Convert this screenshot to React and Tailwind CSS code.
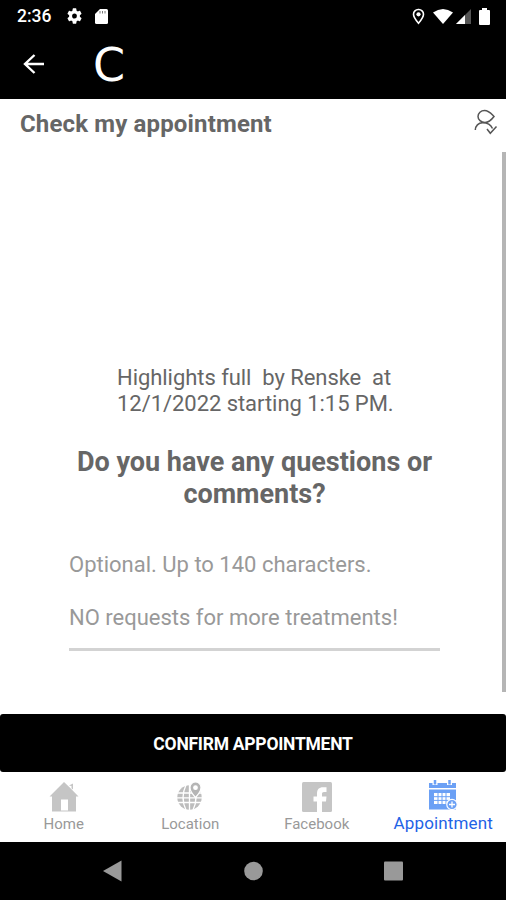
import React from "react";

function StatusBar() {
  return (
    <div className="flex h-8 items-center bg-black pl-[17px] pr-[15px] text-white">
      <span className="w-[50px] text-[17.5px] font-medium leading-8">2:36</span>
      <svg width="15" height="16" viewBox="2 2 20 20" fill="currentColor" preserveAspectRatio="none">
        <path d="M19.14 12.94c.04-.3.06-.61.06-.94s-.02-.64-.07-.94l2.03-1.58a.5.5 0 0 0 .12-.61l-1.92-3.32a.49.49 0 0 0-.59-.22l-2.39.96a7 7 0 0 0-1.62-.94l-.36-2.54A.48.48 0 0 0 13.92 2.4h-3.84a.47.47 0 0 0-.47.41l-.36 2.54c-.59.24-1.13.57-1.62.94l-2.39-.96a.48.48 0 0 0-.59.22L2.74 8.87a.47.47 0 0 0 .12.61l2.03 1.58a6 6 0 0 0 0 1.88l-2.03 1.58a.5.5 0 0 0-.12.61l1.92 3.32c.12.22.37.29.59.22l2.39-.96c.5.38 1.03.7 1.62.94l.36 2.54c.05.24.24.41.48.41h3.84c.24 0 .44-.17.47-.41l.36-2.54a7 7 0 0 0 1.62-.94l2.39.96c.22.08.47 0 .59-.22l1.92-3.32a.47.47 0 0 0-.12-.61zM12 15.200A3.200 3.200 0 1 1 12 8.800a3.200 3.200 0 0 1 0 6.400z" />
      </svg>
      <svg className="ml-[13px]" width="13" height="15" viewBox="0 0 13 15">
        <path d="M5 0H11.500Q13 0 13 1.500V13.500Q13 15 11.500 15H1.500Q0 15 0 13.500V5Z" fill="white" />
        <path d="M5 2V4.500M7.500 2V4.500M10 2V4.500" stroke="#777" strokeWidth="1" />
      </svg>
      <div className="flex-1" />
      <svg width="13" height="17" viewBox="0 0 13 17">
        <path d="M6.500 1.500A4.700 4.700 0 0 0 1.500 6.300C1.500 9.500 6.500 15.300 6.500 15.300S11.500 9.500 11.500 6.300A4.700 4.700 0 0 0 6.500 1.500Z" fill="none" stroke="white" strokeWidth="1.600" />
        <circle cx="6.500" cy="6.300" r="2.100" fill="white" />
      </svg>
      <svg className="ml-[8px]" width="20" height="15" viewBox="0 0 20 15">
        <path d="M0 3.500Q10-3.500 20 3.500L10 15Z" fill="white" />
      </svg>
      <svg className="ml-[3px]" width="15" height="15" viewBox="0 0 15 15">
        <path d="M15 0V15H0Z" fill="#555" />
        <path d="M9 6V15H0Z" fill="white" />
      </svg>
      <svg className="ml-2 mr-px" width="11" height="17" viewBox="0 0 11 17">
        <path d="M3 0H8V2H10Q11 2 11 3V16Q11 17 10 17H1Q0 17 0 16V3Q0 2 1 2H3Z" fill="white" />
      </svg>
    </div>
  );
}

function AppBar() {
  return (
    <div className="flex h-[67px] items-center bg-black pl-[23px] text-white">
      <svg className="-mt-1" width="22" height="20" viewBox="0 0 22 20" fill="none" stroke="white" strokeWidth="2.400">
        <path d="M21 10H2M11.500 1L2 10L11.500 19" />
      </svg>
      <span className="ml-[48px] font-['DejaVu_Sans',sans-serif] text-[46px] leading-[67px]">C</span>
    </div>
  );
}

function UserCheckIcon() {
  return (
    <svg width="24" height="26" viewBox="0 0 24 26" fill="none" stroke="#555" strokeWidth="1.500">
      <path d="M20 7.500C17 11.500 14.500 13.500 11 13.500C7 13.500 4 10.500 4 7.500C4 4 7 1.500 10.500 1.500C15 1.500 17.500 5 20 7.500ZM1.300 21C1.300 17 4.500 13.700 8.500 13.700C13 13.700 17 16 18.500 19.500" />
      <path d="M13 20L16.300 24.300L22.500 17.500" />
    </svg>
  );
}

function HomeIcon() {
  return (
    <svg width="30" height="30" viewBox="0 0 30 30" fill="#c5c5c5">
      <path fillRule="evenodd" d="M15 0L21.500 6.300L29.500 14.500H27V29.500H3V14.500H.5ZM12 17.500H19V28.500H12Z" />
      <path d="M20 3.500L24 1.500V7.500L22.500 6.200V4Z" />
    </svg>
  );
}

function LocationIcon() {
  return (
    <svg width="28" height="30" viewBox="0 0 28 30">
      <circle cx="13.500" cy="15.500" r="12.200" fill="#bdbdbd" />
      <path d="M0 11H27M0 15.800H27M0 20.500H27M13.500 3V30M10 3Q4 15.500 10 28M17 3Q23 15.500 17 28" stroke="white" strokeWidth="1.300" fill="none" />
      <path d="M19.500 0A5.500 5.500 0 0 0 14 5.500C14 9.500 19.500 15.500 19.500 15.500S25 9.500 25 5.500A5.500 5.500 0 0 0 19.500 0Z" fill="#b5b5b5" stroke="white" strokeWidth="1.200" />
      <circle cx="19.500" cy="5.700" r="2.400" fill="white" />
    </svg>
  );
}

function FacebookIcon() {
  return (
    <svg width="30" height="30" viewBox="0 0 30 30">
      <rect width="30" height="30" rx="1.500" fill="#c5c5c5" />
      <path d="M15 30V19.500H11.500V14.500H15V11.500C15 7.500 17 5.300 21 5.300H24.500V10H22C20.500 10 20 10.700 20 12V14.500H24.500L24 19.500H20V30Z" fill="white" />
    </svg>
  );
}

function AppointmentIcon() {
  return (
    <svg width="30" height="31" viewBox="0 0 30 31">
      <path d="M1 3H28V8H1ZM1 9.500H28V29.500H1Z" fill="#6ba0f5" />
      <path d="M7 0V5M21.500 0V5" stroke="white" strokeWidth="5" />
      <path d="M7 0V4.500M21.500 0V4.500" stroke="#6ba0f5" strokeWidth="2.500" />
      <path d="M6 13H22V24H6Z" fill="white" />
      <path d="M6 16.700H22M6 20.400H22M10 13V24M14 13V24M18 13V24" stroke="#6ba0f5" strokeWidth="1" />
      <circle cx="24" cy="24.500" r="5.200" fill="#6ba0f5" stroke="white" strokeWidth="1.200" />
      <path d="M24 21.500V27.500M21 24.500H27" stroke="white" strokeWidth="1.300" />
    </svg>
  );
}

function Tab({ icon, label, active }) {
  return (
    <div className="flex flex-1 flex-col items-center">
      <div className={active ? "h-[33px] pl-px pt-2" : "h-[33px] pl-px pt-[10px]"}>{icon}</div>
      <span
        className={
          active
            ? "mt-[8px] pl-px text-[17px] leading-5 tracking-[0.15px] text-[#1f63e6]"
            : "mt-[8px] pl-px text-[15px] leading-[22px] text-[#999]"
        }
      >
        {label}
      </span>
    </div>
  );
}

export default function App() {
  return (
    <div className="flex h-[900px] w-[506px] flex-col overflow-hidden bg-white font-['Roboto',sans-serif]">
      <StatusBar />
      <AppBar />
      <div className="flex h-[53px] justify-between pl-5 pr-2">
        <h1 className="text-[24px] font-bold leading-[50px] tracking-[0.15px] text-[#666]">Check my appointment</h1>
        <div className="pt-[10px]"><UserCheckIcon /></div>
      </div>
      <main className="flex h-[562px] justify-between">
        <div className="ml-[69px] w-[371px] pt-[213px]">
          <p className="ml-12 whitespace-pre text-[22px] leading-[26px] tracking-[-0.05px] text-[#666]">
            {"Highlights full  by Renske  at\n12/1/2022 starting 1:15 PM."}
          </p>
          <h2 className="mt-[29px] whitespace-pre text-center text-[27px] font-bold leading-8 text-[#666]">
            {"Do you have any questions or\ncomments?"}
          </h2>
          <p className="mt-[42px] whitespace-pre text-[22px] leading-[26.5px] text-[#999]">
            {"Optional. Up to 140 characters.\n\nNO requests for more treatments!"}
          </p>
          <div className="mt-[16px] h-[3px] bg-[#d3d3d3]" />
        </div>
        <div className="h-[540px] w-1 bg-[#b5b5b5]" />
      </main>
      <button className="h-[58px] rounded-[3px] bg-black pt-[3px] text-[17.5px] font-bold tracking-[-0.25px] text-white">CONFIRM APPOINTMENT</button>
      <nav className="flex h-[70px]">
        <Tab label="Home" icon={<HomeIcon />} />
        <Tab label="Location" icon={<LocationIcon />} />
        <Tab label="Facebook" icon={<FacebookIcon />} />
        <Tab label="Appointment" icon={<AppointmentIcon />} active />
      </nav>
      <div className="flex h-[58px] items-center bg-black pl-[103px] pr-[103px]">
        <svg width="300" height="22" viewBox="0 0 300 22" fill="#999">
          <path d="M0 11L18.500 .5V21.500Z" />
          <circle cx="150.500" cy="11" r="9.300" />
          <rect x="281" y="1.500" width="19" height="19" rx="1" />
        </svg>
      </div>
    </div>
  );
}
